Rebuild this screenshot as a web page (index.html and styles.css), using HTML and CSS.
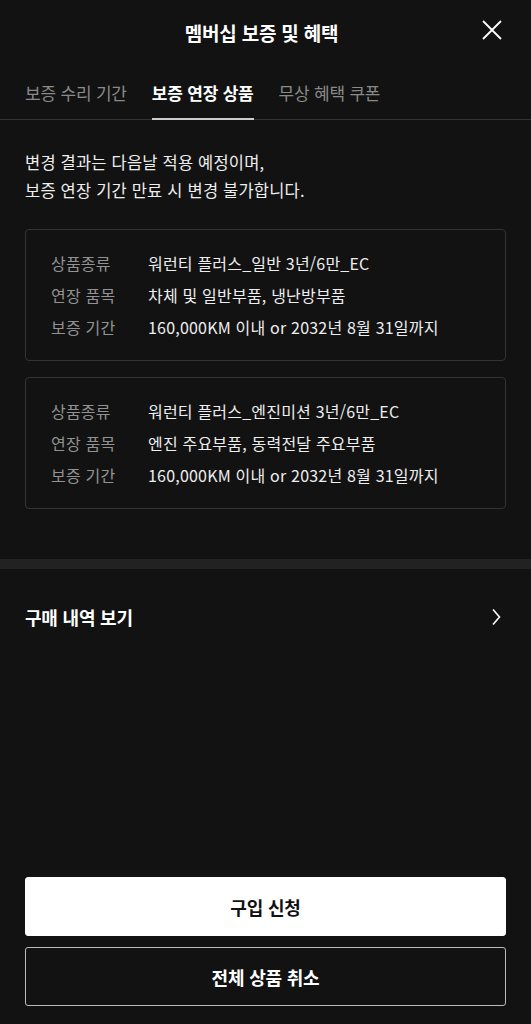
FILE: index.html
```html
<!DOCTYPE html>
<html lang="ko">
<head>
    <meta charset="UTF-8">
    <meta name="viewport" content="width=device-width, initial-scale=1.0">
    <title>멤버십 보증 및 혜택</title>
    <link rel="stylesheet" href="styles.css">
</head>
<body>
    <div class="page">
        <header class="top-bar">
            <h1 class="title">멤버십 보증 및 혜택</h1>
            <button class="close-btn" aria-label="닫기">
                <svg width="20" height="20" viewBox="0 0 20 20">
                    <path d="M1 1 L19 19 M19 1 L1 19" stroke="#fff" stroke-width="1.8" fill="none"/>
                </svg>
            </button>
        </header>

        <nav class="tabs">
            <a href="#" class="tab">보증 수리 기간</a>
            <a href="#" class="tab active">보증 연장 상품</a>
            <a href="#" class="tab">무상 혜택 쿠폰</a>
        </nav>

        <section class="content">
            <p class="notice">변경 결과는 다음날 적용 예정이며,<br>보증 연장 기간 만료 시 변경 불가합니다.</p>

            <div class="card">
                <div class="row"><span class="label">상품종류</span><span class="value">워런티 플러스_일반 3년/6만_EC</span></div>
                <div class="row"><span class="label">연장 품목</span><span class="value">차체 및 일반부품, 냉난방부품</span></div>
                <div class="row"><span class="label">보증 기간</span><span class="value">160,000KM 이내 or 2032년 8월 31일까지</span></div>
            </div>

            <div class="card">
                <div class="row"><span class="label">상품종류</span><span class="value">워런티 플러스_엔진미션 3년/6만_EC</span></div>
                <div class="row"><span class="label">연장 품목</span><span class="value">엔진 주요부품, 동력전달 주요부품</span></div>
                <div class="row"><span class="label">보증 기간</span><span class="value">160,000KM 이내 or 2032년 8월 31일까지</span></div>
            </div>
        </section>

        <div class="divider"></div>

        <a href="#" class="link-row">
            <span>구매 내역 보기</span>
            <svg width="10" height="18" viewBox="0 0 10 18">
                <path d="M2 1.5 L8.5 9 L2 16.5" stroke="#fff" stroke-width="1.6" fill="none"/>
            </svg>
        </a>

        <footer class="actions">
            <button class="btn btn-primary">구입 신청</button>
            <button class="btn btn-outline">전체 상품 취소</button>
        </footer>
    </div>
</body>
</html>
```

FILE: styles.css
```css
* {
    margin: 0;
    padding: 0;
    box-sizing: border-box;
}

body {
    font-family: "Noto Sans CJK KR", "Noto Sans", sans-serif;
    background: #121212;
    color: #eee;
}

.page {
    display: flex;
    flex-direction: column;
    min-height: 100vh;
}

/* Header */
.top-bar {
    position: relative;
    height: 64px;
    display: flex;
    align-items: center;
    justify-content: center;
}

.title {
    font-size: 19px;
    font-weight: 700;
    color: #fff;
    letter-spacing: -0.2px;
    margin-right: 8px;
}

.close-btn {
    position: absolute;
    right: 29px;
    top: 20px;
    background: none;
    border: none;
    width: 20px;
    height: 20px;
    cursor: pointer;
}

.close-btn svg {
    display: block;
}

/* Tabs */
.tabs {
    display: flex;
    gap: 25px;
    padding: 0 25px;
    height: 56px;
    border-bottom: 1px solid #333;
}

.tab {
    display: flex;
    align-items: center;
    height: 56px;
    margin-bottom: -1px;
    font-size: 17px;
    color: #8a8a8a;
    text-decoration: none;
    letter-spacing: -0.2px;
    border-bottom: 2px solid transparent;
    padding-top: 2px;
}

.tab.active {
    color: #fff;
    font-weight: 700;
    border-bottom-color: #ccc;
}

/* Content */
.content {
    padding: 28px 25px 50px;
}

.notice {
    font-size: 16.5px;
    line-height: 28px;
    color: #eee;
    letter-spacing: 0.2px;
    margin-bottom: 25px;
}

.card {
    border: 1px solid #333;
    border-radius: 4px;
    padding: 17px 25px;
}

.card + .card {
    margin-top: 16px;
}

.row {
    display: flex;
    height: 32px;
    align-items: center;
    font-size: 16px;
    letter-spacing: 0.2px;
}

.label {
    width: 97px;
    color: #929292;
    flex-shrink: 0;
}

.value {
    color: #eee;
}

.divider {
    height: 10px;
    background: #222;
}

.link-row {
    display: flex;
    justify-content: space-between;
    align-items: center;
    height: 96px;
    padding: 0 30px 0 25px;
    color: #fff;
    text-decoration: none;
    font-size: 18px;
    font-weight: 700;
    letter-spacing: -0.2px;
}

.link-row svg {
    display: block;
}

/* Bottom buttons */
.actions {
    margin-top: auto;
    display: flex;
    flex-direction: column;
    gap: 11px;
    padding: 0 25px 18px;
}

.btn {
    height: 59px;
    border-radius: 3px;
    font-family: inherit;
    font-size: 18px;
    font-weight: 700;
    letter-spacing: -0.2px;
    cursor: pointer;
}

.btn-primary {
    background: #fff;
    color: #111;
    border: 1px solid #fff;
}

.btn-outline {
    background: transparent;
    color: #fff;
    border: 1px solid #bbb;
}
```
